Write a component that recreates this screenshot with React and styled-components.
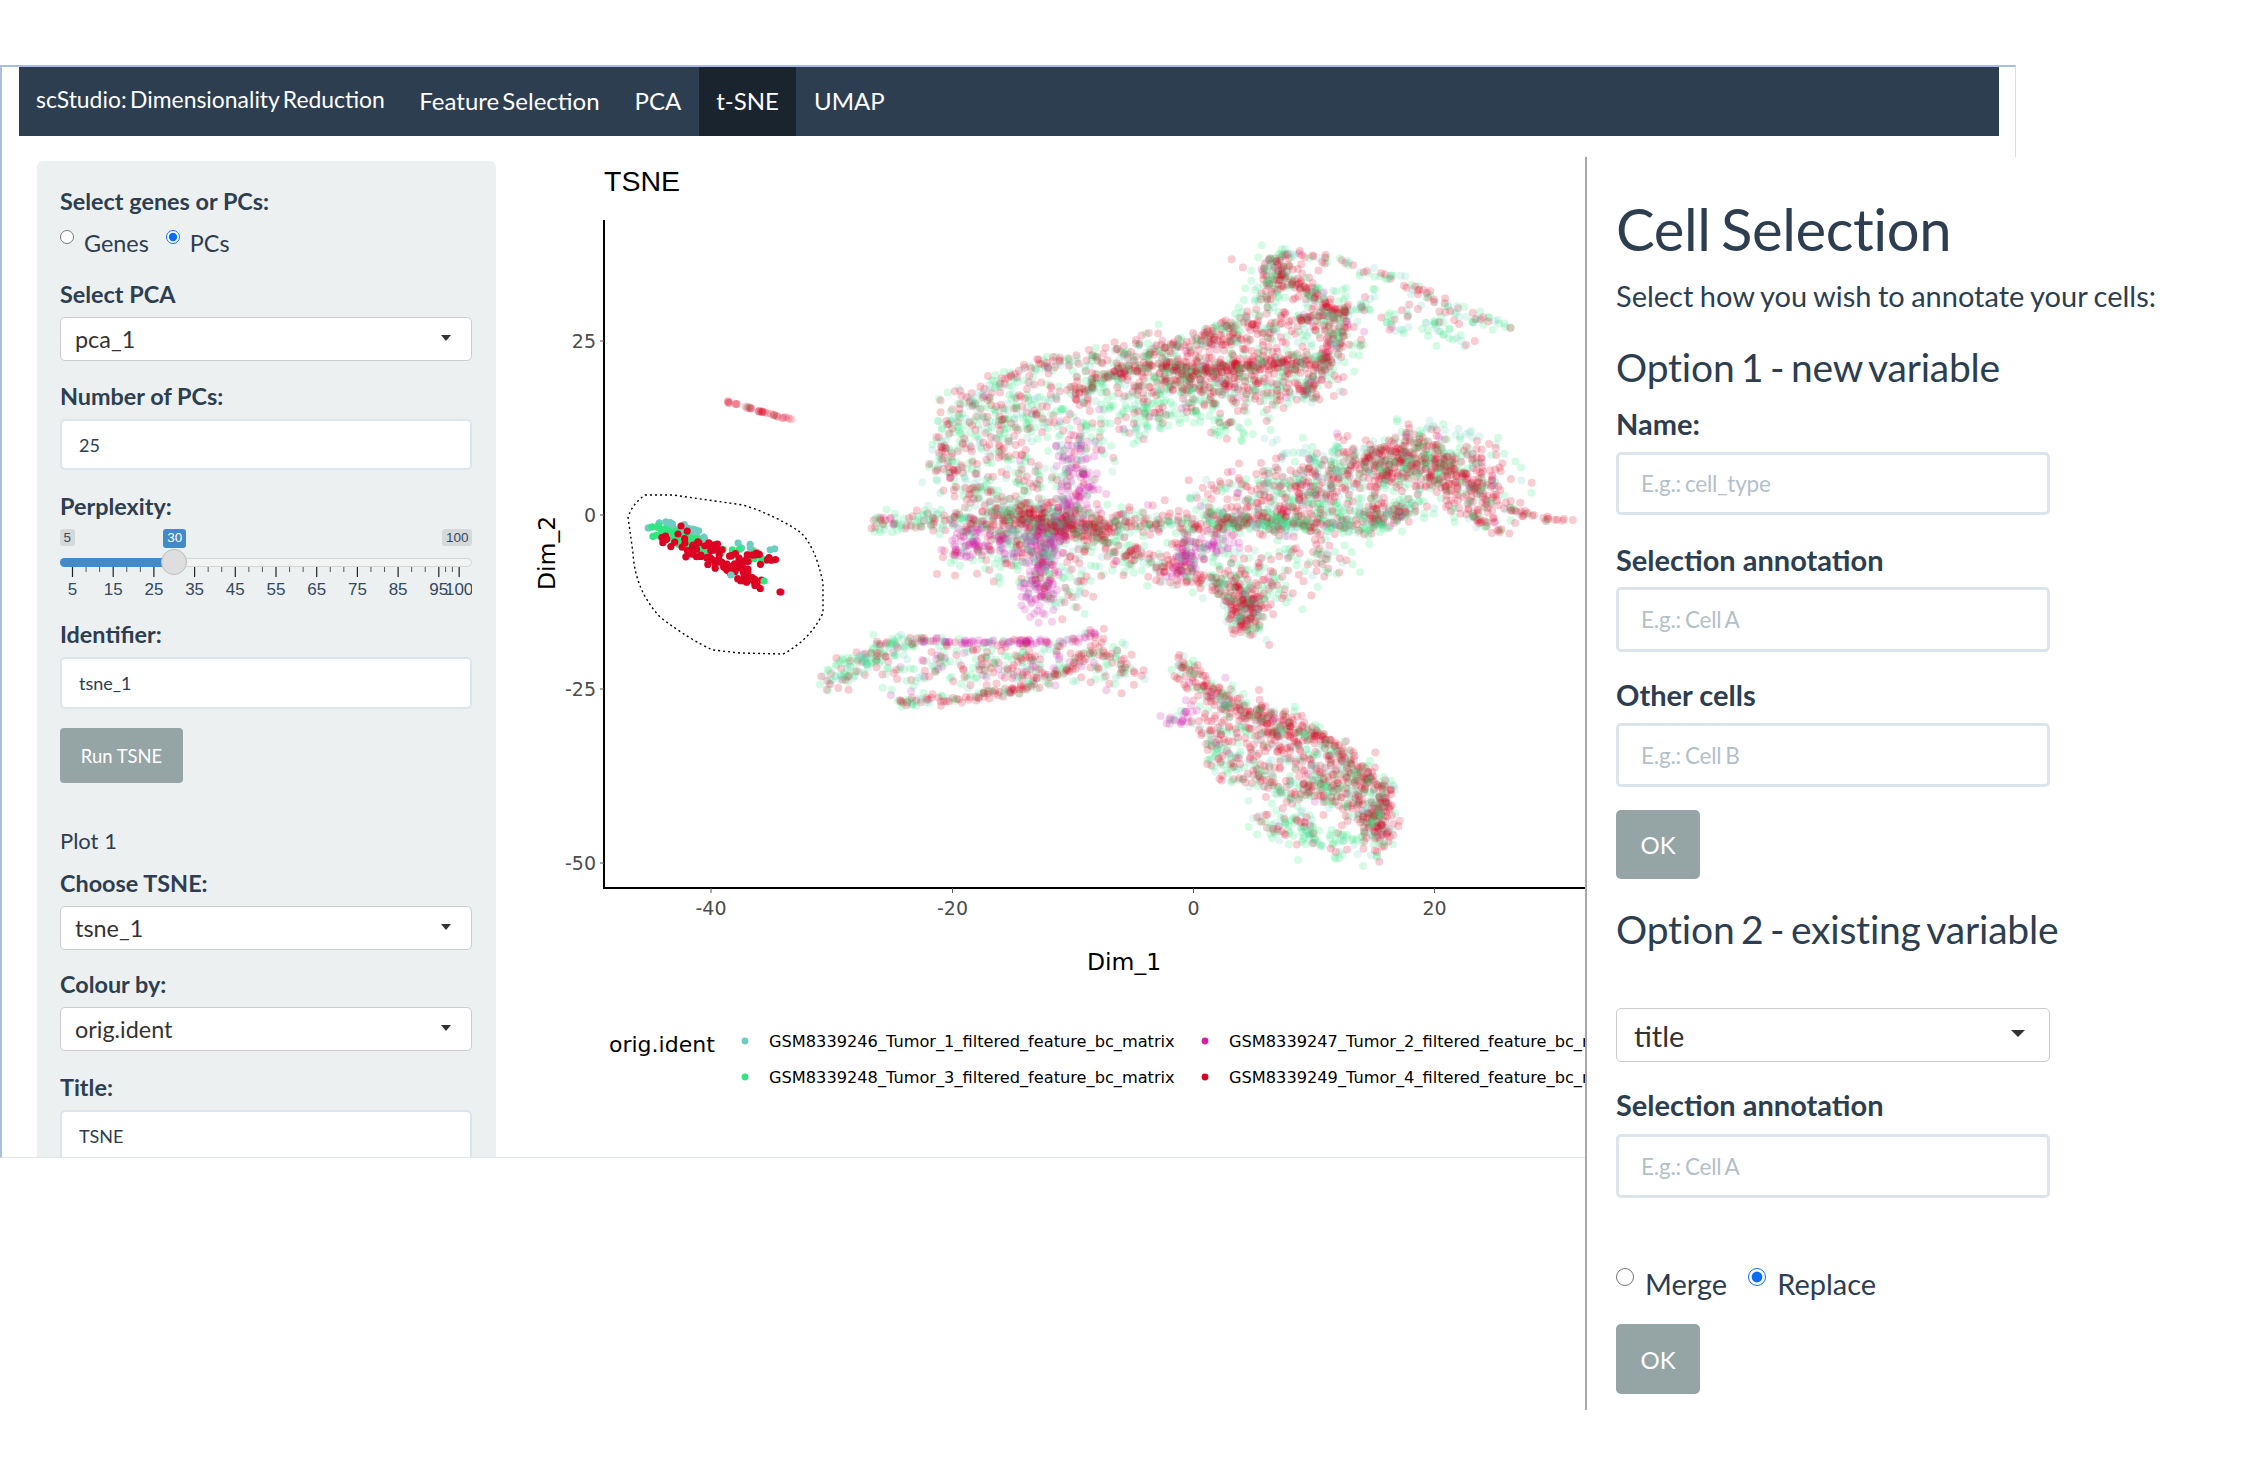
import React from 'react';
import styled, { createGlobalStyle } from 'styled-components';

const GlobalStyle = createGlobalStyle`
  html, body {
    margin: 0;
    padding: 0;
    background: #fff;
    font-family: Lato, "Open Sans", sans-serif;
    color: #2c3e50;
  }
`;

const Page = styled.div`
  position: relative;
  width: 2268px;
  height: 1466px;
  padding-top: 65px;
  box-sizing: border-box;
  overflow: hidden;
`;

const Frame = styled.div`
  width: 2016px;
  height: 1093px;
  box-sizing: border-box;
  padding-left: 17px;
  border-top: 2px solid #a9bce6;
  border-left: 2px solid #a9bce6;
  border-right: 1px solid #d5def2;
  border-bottom: 1px solid #dfe6f2;
  overflow: hidden;
`;

const Navbar = styled.nav`
  display: flex;
  width: 1980px;
  height: 69px;
  background: #2c3e50;
  color: #fff;
`;

const Brand = styled.div`
  display: flex;
  align-items: center;
  padding: 0 17px 5px;
  font-size: 22.9px;
  word-spacing: -2.4px;
`;

const NavItem = styled.div`
  display: flex;
  align-items: center;
  padding: 0 17.5px 3px;
  font-size: 24px;
  word-spacing: -3px;
  background: ${(p) => (p.$active ? '#1a242f' : 'transparent')};
`;

const Row = styled.div`
  display: flex;
  align-items: flex-start;
`;

const Sidebar = styled.aside`
  flex: none;
  width: 459px;
  height: 1100px;
  margin: 25px 0 0 18px;
  padding: 25px 23px 0;
  box-sizing: border-box;
  background: #ecf0f1;
  border-radius: 6px;
`;

const Label = styled.div`
  margin-top: ${(p) => p.$top || 0}px;
  margin-bottom: 8px;
  font-size: 23.4px;
  line-height: 30px;
  font-weight: 700;
  color: #2c3e50;
`;

const RadioRow = styled.div`
  display: flex;
  align-items: center;
  height: ${(p) => p.$height}px;
  margin-top: ${(p) => p.$top}px;
  font-size: ${(p) => p.$size}px;
  color: #2c3e50;
`;

const RadioItem = styled.label`
  display: flex;
  align-items: center;
  margin-right: ${(p) => p.$gap}px;
`;

const Radio = styled.input.attrs({ type: 'radio' })`
  flex: none;
  width: ${(p) => p.$size}px;
  height: ${(p) => p.$size}px;
  margin: -12px ${(p) => p.$space}px 0 0;
  accent-color: #0a6cf5;
`;

const SelectBox = styled.div`
  display: flex;
  align-items: center;
  justify-content: space-between;
  width: ${(p) => (p.$big ? 434 : 412)}px;
  height: ${(p) => (p.$big ? 54 : 44)}px;
  padding: 0 ${(p) => (p.$big ? 24 : 20)}px 0 ${(p) => (p.$big ? 17 : 14)}px;
  box-sizing: border-box;
  background: #fff;
  border: 1px solid #ccc;
  border-radius: 5px;
  font-size: ${(p) => (p.$big ? 29 : 23.4)}px;
  color: #333;
`;

const Caret = styled.span`
  width: 0;
  height: 0;
  margin-top: -3px;
  border-left: ${(p) => (p.$big ? 7 : 5.5)}px solid transparent;
  border-right: ${(p) => (p.$big ? 7 : 5.5)}px solid transparent;
  border-top: ${(p) => (p.$big ? 7 : 6)}px solid #333;
`;

const SideInput = styled.input`
  display: block;
  width: 412px;
  height: ${(p) => p.$height || 52}px;
  padding: 0 17px;
  box-sizing: border-box;
  background: #fff;
  border: 2.5px solid #dce4ec;
  border-radius: 5px;
  font: 18px Lato, sans-serif;
  color: #2c3e50;
  outline: none;
`;

const SliderWrap = styled.div`
  position: relative;
  width: 412px;
  height: 90px;
`;

const Chip = styled.span`
  position: absolute;
  top: 0;
  height: ${(p) => (p.$active ? 19 : 17)}px;
  padding: 0 ${(p) => (p.$active ? 4 : 3.5)}px;
  background: ${(p) => (p.$active ? '#428bca' : '#d5d9da')};
  color: ${(p) => (p.$active ? '#fff' : '#34495e')};
  border-radius: 3px;
  font: 13.5px/17px "Liberation Sans", sans-serif;
`;

const Track = styled.div`
  position: absolute;
  left: 0;
  right: 0;
  top: 29px;
  height: 9px;
  background: #f2f4f4;
  border: 1px solid #d3d6d7;
  box-sizing: border-box;
  border-radius: 5px;
`;

const TrackFill = styled.div`
  position: absolute;
  left: 0;
  top: 29px;
  height: 9px;
  background: #428bca;
  border-radius: 5px 0 0 5px;
`;

const Thumb = styled.div`
  position: absolute;
  top: 20px;
  width: 26px;
  height: 26px;
  box-sizing: border-box;
  background: #dedede;
  border: 1px solid #bdbdbd;
  border-radius: 50%;
`;

const Ruler = styled.svg`
  position: absolute;
  left: 0;
  top: 38px;
`;

const RunButton = styled.div`
  display: flex;
  align-items: center;
  justify-content: center;
  width: 123px;
  height: 55px;
  margin-top: 19px;
  background: #95a5a6;
  border-radius: 4px;
  color: #fff;
  font-size: 18.4px;
`;

const PlotLabel = styled.div`
  margin-top: 43px;
  margin-bottom: 12px;
  font-size: 22px;
  line-height: 30px;
  color: #2c3e50;
`;

const PlotSvg = styled.svg`
  flex: none;
  margin: 14px 0 0 24px;
`;

const Panel = styled.section`
  position: absolute;
  left: 1585px;
  top: 157px;
  width: 683px;
  height: 1253px;
  box-sizing: border-box;
  padding: 39px 0 0 29px;
  background: #fff;
  border-left: 2px solid #a8a8a8;
`;

const PanelTitle = styled.h1`
  margin: 0;
  font-size: 58px;
  line-height: 66px;
  font-weight: 400;
  letter-spacing: -0.4px;
  word-spacing: -4px;
  color: #2c3e50;
`;

const PanelText = styled.p`
  margin: 14px 0 0;
  font-size: 29px;
  line-height: 40px;
  word-spacing: -1px;
  white-space: nowrap;
  color: #2c3e50;
`;

const OptionTitle = styled.h3`
  margin: ${(p) => p.$top}px 0 ${(p) => p.$bottom || 0}px;
  font-size: 39px;
  line-height: 50px;
  font-weight: 400;
  letter-spacing: -0.2px;
  word-spacing: -3.2px;
  color: #2c3e50;
`;

const PanelLabel = styled.div`
  margin: ${(p) => p.$top}px 0 ${(p) => p.$bottom}px;
  font-size: 29px;
  line-height: 36px;
  font-weight: 700;
  color: #2c3e50;
`;

const PanelInput = styled.input`
  display: block;
  width: 434px;
  height: ${(p) => p.$height}px;
  padding: 0 22px;
  box-sizing: border-box;
  background: #fff;
  border: 3px solid #dce4ec;
  border-radius: 5px;
  font: 22.5px Lato, sans-serif;
  letter-spacing: -0.2px;
  word-spacing: -1.6px;
  outline: none;
  &::placeholder {
    color: #b4bfca;
    opacity: 1;
  }
`;

const OkButton = styled.div`
  display: flex;
  align-items: center;
  justify-content: center;
  width: 84px;
  height: ${(p) => p.$height}px;
  margin-top: ${(p) => p.$top}px;
  background: #95a5a6;
  border-radius: 5px;
  color: #fff;
  font-size: 24px;
`;

// scatter data, generated from hand traced strands of the t-SNE map
const COLORS = ['#6dcdc0', '#d21fa8', '#2ee87f', '#dc0022'];
const RED = [0.08, 0.01, 0.26, 0.65];
const GREEN = [0.2, 0.01, 0.54, 0.25];
const MIXED = [0.14, 0.02, 0.38, 0.46];
const PINK = [0.04, 0.8, 0.08, 0.08];
const TEAL = [0.7, 0, 0.2, 0.1];

const mulberry = (seed) => () => {
  seed = (seed + 0x6d2b79f5) | 0;
  let t = Math.imul(seed ^ (seed >>> 15), 1 | seed);
  t = (t + Math.imul(t ^ (t >>> 7), 61 | t)) ^ t;
  return ((t ^ (t >>> 14)) >>> 0) / 4294967296;
};

const STRANDS = [
  // upper arc
  [[[610, 640], [620, 570], [650, 510], [700, 465], [760, 430], [830, 415], [900, 410], [960, 395], [1020, 365], [1060, 330], [1085, 290], [1095, 240], [1105, 210]], 9, 320, MIXED],
  [[[1080, 225], [1105, 208], [1150, 210], [1200, 230], [1270, 260], [1340, 310], [1440, 365]], 7, 110, MIXED],
  [[[810, 490], [850, 455], [900, 435], [1000, 440], [1100, 430], [1170, 420]], 6, 260, RED],
  [[[1100, 240], [1150, 290], [1190, 340], [1185, 410], [1130, 500]], 8, 190, RED],
  [[[1130, 345], [1190, 325], [1235, 310]], 3, 40, RED],
  [[[1200, 300], [1290, 340], [1380, 370]], 22, 80, GREEN],
  [[[990, 380], [1060, 370], [1120, 350]], 16, 110, RED],
  [[[900, 480], [1000, 470], [1150, 490]], 24, 230, MIXED],
  [[[850, 570], [930, 520], [1000, 530], [1060, 570]], 20, 130, GREEN],
  [[[640, 520], [720, 530], [800, 560], [850, 590]], 26, 110, GREEN],
  // fill of the upper region
  [[[660, 600], [760, 490], [900, 490]], 34, 230, MIXED],
  [[[900, 410], [1000, 450], [1150, 430]], 30, 340, RED],
  [[[1090, 240], [1150, 320], [1190, 400]], 26, 180, MIXED],
  // left body
  [[[615, 620], [650, 680], [720, 730], [800, 760]], 16, 200, MIXED],
  [[[680, 600], [740, 650], [790, 700]], 28, 110, MIXED],
  // central band
  [[[505, 750], [600, 745], [700, 745], [800, 750], [900, 745], [1000, 745], [1100, 750], [1200, 745], [1300, 720]], 13, 620, MIXED],
  [[[1000, 745], [1100, 750], [1230, 760], [1290, 725]], 8, 170, GREEN],
  [[[720, 745], [780, 750], [860, 770]], 15, 200, RED],
  [[[1090, 700], [1170, 650], [1230, 620]], 30, 170, MIXED],
  [[[1130, 600], [1160, 640], [1180, 700]], 24, 50, TEAL],
  [[[1000, 720], [1150, 700], [1300, 650]], 36, 340, MIXED],
  [[[640, 790], [800, 800], [1000, 820], [1120, 870]], 30, 320, MIXED],
  // right blob
  [[[1210, 640], [1290, 600], [1350, 650], [1420, 690]], 18, 250, RED],
  [[[1220, 620], [1350, 650], [1420, 700]], 26, 240, RED],
  [[[1290, 560], [1350, 610], [1430, 640]], 18, 60, MIXED],
  [[[1340, 700], [1390, 740], [1430, 770]], 6, 50, RED],
  [[[1430, 720], [1480, 740], [1540, 745]], 3, 30, RED],
  [[[1300, 560], [1330, 560], [1440, 595]], 7, 20, TEAL],
  // pink threads
  [[[800, 590], [820, 680], [770, 760], [750, 920]], 14, 330, PINK],
  [[[620, 790], [690, 780], [760, 800]], 16, 130, PINK],
  [[[950, 850], [980, 800], [1025, 790]], 13, 100, PINK],
  [[[690, 800], [760, 860], [810, 900]], 24, 90, MIXED],
  // mid lower branch
  [[[860, 800], [960, 850], [1050, 900], [1060, 970]], 13, 160, RED],
  [[[1110, 860], [1070, 900], [1050, 950]], 13, 60, RED],
  [[[1020, 870], [1060, 900], [1060, 960]], 14, 120, RED],
  [[[1130, 800], [1200, 830], [1100, 800]], 22, 50, MIXED],
  // lower left band
  [[[450, 1075], [500, 1020], [570, 985]], 12, 130, GREEN],
  [[[575, 985], [700, 990], [810, 985], [835, 970]], 3, 100, PINK],
  [[[550, 1110], [640, 1105], [720, 1085], [800, 1040], [830, 1000]], 5, 140, RED],
  [[[600, 1020], [680, 1040], [760, 1020]], 24, 70, MIXED],
  [[[500, 1050], [650, 1040], [850, 1030]], 24, 160, [0.14, 0.16, 0.3, 0.4]],
  [[[830, 990], [860, 1020], [880, 1060]], 16, 60, RED],
  // bottom right band
  [[[960, 1030], [990, 1080], [1050, 1130], [1130, 1160], [1190, 1210], [1250, 1290], [1250, 1380]], 11, 460, RED],
  [[[1000, 1150], [1020, 1230], [1100, 1280], [1180, 1290], [1240, 1340], [1250, 1400]], 15, 300, MIXED],
  [[[1010, 1110], [1110, 1210], [1230, 1310]], 26, 330, RED],
  [[[1070, 1330], [1140, 1380], [1225, 1400]], 20, 130, GREEN],
  [[[930, 1145], [960, 1150], [985, 1105]], 6, 24, PINK],
  // small group above the lasso
  [[[297, 505], [350, 525], [400, 545]], 1, 34, [0, 0, 0.05, 0.95]],
];

const buildPoints = () => {
  const rnd = mulberry(20);
  const gauss = () => (rnd() + rnd() + rnd() - 1.5) / 0.75;
  const pick = (mix) => {
    let r = rnd();
    for (let i = 0; i < 4; i += 1) {
      r -= mix[i];
      if (r <= 0) return i;
    }
    return 3;
  };
  const pts = [];
  STRANDS.forEach(([line, spread, count, mix]) => {
    const lens = line.slice(1).map((p, i) => Math.hypot(p[0] - line[i][0], p[1] - line[i][1]));
    const total = lens.reduce((a, b) => a + b, 0);
    for (let n = 0; n < count; n += 1) {
      let d = rnd() * total;
      let i = 0;
      while (i < lens.length - 1 && d > lens[i]) {
        d -= lens[i];
        i += 1;
      }
      const t = d / lens[i];
      const zx = line[i][0] + (line[i + 1][0] - line[i][0]) * t + gauss() * spread * 1.5;
      const zy = line[i][1] + (line[i + 1][1] - line[i][1]) * t + gauss() * spread * 1.5;
      pts.push({ x: 520 + zx / 1.452, y: 150 + zy / 2.01, c: COLORS[pick(mix)], k: rnd() });
    }
  });
  return pts.sort((a, b) => a.k - b.k);
};

const buildSelected = () => {
  const rnd = mulberry(7);
  const pts = [];
  const along = (x0, y0, x1, y1, spread, count, c) => {
    for (let n = 0; n < count; n += 1) {
      const t = rnd();
      pts.push({
        x: x0 + (x1 - x0) * t + (rnd() - 0.5) * spread,
        y: y0 + (y1 - y0) * t + (rnd() - 0.5) * spread,
        c,
      });
    }
  };
  along(652, 523, 705, 535, 10, 36, COLORS[0]);
  along(739, 547, 772, 556, 14, 12, COLORS[0]);
  along(654, 527, 705, 548, 15, 55, COLORS[2]);
  along(705, 545, 768, 562, 12, 14, COLORS[2]);
  along(662, 535, 666, 541, 7, 6, COLORS[3]);
  along(682, 543, 762, 578, 24, 90, COLORS[3]);
  along(748, 553, 775, 560, 5, 10, COLORS[3]);
  pts.push({ x: 681, y: 526, c: COLORS[3] }, { x: 678, y: 534, c: COLORS[3] }, { x: 731, y: 575, c: COLORS[0] }, { x: 764, y: 581, c: COLORS[2] });
  pts.push({ x: 781, y: 592, c: COLORS[1] }, { x: 780, y: 592, c: COLORS[3] });
  return pts;
};

const LASSO = 'M 645 495 L 673 495 L 743 505 Q 775 515 800 532 Q 815 545 823 583 L 823 613 Q 810 640 783 654 L 740 653 L 713 650 Q 690 640 660 617 Q 635 590 633 553 L 628 517 Q 633 503 645 495 Z';

const POINTS = buildPoints();
const SELECTED = buildSelected();
const LEGEND = [
  { x: 745, y: 1041, c: COLORS[0], label: 'GSM8339246_Tumor_1_filtered_feature_bc_matrix' },
  { x: 1205, y: 1041, c: COLORS[1], label: 'GSM8339247_Tumor_2_filtered_feature_bc_matrix' },
  { x: 745, y: 1077, c: COLORS[2], label: 'GSM8339248_Tumor_3_filtered_feature_bc_matrix' },
  { x: 1205, y: 1077, c: COLORS[3], label: 'GSM8339249_Tumor_4_filtered_feature_bc_matrix' },
];
const DEJAVU = '"DejaVu Sans", sans-serif';
const ARIAL = '"Liberation Sans", sans-serif';

const TsnePlot = () => (
  <PlotSvg width="1065" height="1007" viewBox="520 150 1065 1007">
    <text x="604" y="191" fontFamily={ARIAL} fontSize="28.5" fill="#000">TSNE</text>
    {POINTS.map((p, i) => (
      <circle key={i} cx={p.x} cy={p.y} r="4" fill={p.c} opacity="0.2" />
    ))}
    {SELECTED.map((p, i) => (
      <circle key={i} cx={p.x} cy={p.y} r="3.6" fill={p.c} />
    ))}
    <path d={LASSO} fill="none" stroke="#000" strokeWidth="1.4" strokeDasharray="2 3" />
    <path d="M604 220 V888 H1585" fill="none" stroke="#000" strokeWidth="2" />
    {[[25, 341], [0, 515], [-25, 689], [-50, 863]].map(([v, y]) => (
      <g key={v}>
        <line x1="600" x2="604" y1={y} y2={y} stroke="#555" />
        <text x="596" y={y + 6.5} textAnchor="end" fontFamily={DEJAVU} fontSize="19" fill="#4d4d4d">{v}</text>
      </g>
    ))}
    {[[-40, 711], [-20, 952.5], [0, 1193.5], [20, 1434.6]].map(([v, x]) => (
      <g key={v}>
        <line x1={x} x2={x} y1="888" y2="893" stroke="#555" />
        <text x={x} y="915" textAnchor="middle" fontFamily={DEJAVU} fontSize="19" fill="#4d4d4d">{v}</text>
      </g>
    ))}
    <text x="1124" y="970" textAnchor="middle" fontFamily={DEJAVU} fontSize="23.5" fill="#000">Dim_1</text>
    <text transform="translate(555 553) rotate(-90)" textAnchor="middle" fontFamily={DEJAVU} fontSize="23.5" fill="#000">Dim_2</text>
    <text x="609" y="1052" fontFamily={DEJAVU} fontSize="22" fill="#000">orig.ident</text>
    {LEGEND.map((l) => (
      <g key={l.label}>
        <circle cx={l.x} cy={l.y} r="3.4" fill={l.c} />
        <text x={l.x + 24} y={l.y + 5.5} fontFamily={DEJAVU} fontSize="16.2" fill="#000">{l.label}</text>
      </g>
    ))}
  </PlotSvg>
);

const PerplexitySlider = () => {
  const tickX = (v) => 12.5 + (v - 5) * 4.07;
  const majors = [5, 15, 25, 35, 45, 55, 65, 75, 85, 95];
  const minors = majors.flatMap((v) => (v === 95
    ? [v + 5 / 3, v + 10 / 3]
    : [v + 10 / 3, v + 20 / 3]));
  return (
    <SliderWrap>
      <Chip style={{ left: 0 }}>5</Chip>
      <Chip $active style={{ left: tickX(30) - 11 }}>30</Chip>
      <Chip style={{ right: 0 }}>100</Chip>
      <Track />
      <TrackFill style={{ width: tickX(30) }} />
      <Ruler width="412" height="50" viewBox="0 0 412 50">
        {minors.map((v) => (
          <line key={v} x1={tickX(v)} x2={tickX(v)} y1="0" y2="5" stroke="#555" />
        ))}
        {[...majors, 100].map((v) => (
          <line key={v} x1={tickX(v)} x2={tickX(v)} y1="0" y2="10" stroke="#222" strokeWidth="1.2" />
        ))}
        {[...majors, 100].map((v) => (
          <text key={v} x={tickX(v)} y="28" textAnchor="middle" fontFamily={ARIAL} fontSize="17" fill="#34495e">{v}</text>
        ))}
      </Ruler>
      <Thumb style={{ left: tickX(30) - 13 }} />
    </SliderWrap>
  );
};

const App = () => (
  <Page>
    <GlobalStyle />
    <Frame>
      <Navbar>
        <Brand>scStudio: Dimensionality Reduction</Brand>
        <NavItem>Feature Selection</NavItem>
        <NavItem>PCA</NavItem>
        <NavItem $active>t-SNE</NavItem>
        <NavItem>UMAP</NavItem>
      </Navbar>
      <Row>
        <Sidebar>
          <Label>Select genes or PCs:</Label>
          <RadioRow $height={30} $top={12} $size={23.4}>
            <RadioItem $gap={17}>
              <Radio name="mode" $size={14} $space={10} />
              Genes
            </RadioItem>
            <RadioItem $gap={0}>
              <Radio name="mode" $size={14} $space={10} defaultChecked />
              PCs
            </RadioItem>
          </RadioRow>
          <Label $top={21}>Select PCA</Label>
          <SelectBox>pca_1<Caret /></SelectBox>
          <Label $top={20}>Number of PCs:</Label>
          <SideInput $height={51} defaultValue="25" />
          <Label $top={21}>Perplexity:</Label>
          <PerplexitySlider />
          <Label>Identifier:</Label>
          <SideInput defaultValue="tsne_1" />
          <RunButton>Run TSNE</RunButton>
          <PlotLabel>Plot 1</PlotLabel>
          <Label>Choose TSNE:</Label>
          <SelectBox>tsne_1<Caret /></SelectBox>
          <Label $top={19}>Colour by:</Label>
          <SelectBox>orig.ident<Caret /></SelectBox>
          <Label $top={21}>Title:</Label>
          <SideInput defaultValue="TSNE" />
        </Sidebar>
        <TsnePlot />
      </Row>
    </Frame>
    <Panel>
      <PanelTitle>Cell Selection</PanelTitle>
      <PanelText>Select how you wish to annotate your cells:</PanelText>
      <OptionTitle $top={26}>Option 1 - new variable</OptionTitle>
      <PanelLabel $top={14} $bottom={10}>Name:</PanelLabel>
      <PanelInput $height={63} placeholder="E.g.: cell_type" />
      <PanelLabel $top={27} $bottom={9}>Selection annotation</PanelLabel>
      <PanelInput $height={65} placeholder="E.g.: Cell A" />
      <PanelLabel $top={25} $bottom={10}>Other cells</PanelLabel>
      <PanelInput $height={64} placeholder="E.g.: Cell B" />
      <OkButton $top={23} $height={69}>OK</OkButton>
      <OptionTitle $top={25} $bottom={54}>Option 2 - existing variable</OptionTitle>
      <SelectBox $big>title<Caret $big /></SelectBox>
      <PanelLabel $top={25} $bottom={11}>Selection annotation</PanelLabel>
      <PanelInput $height={64} placeholder="E.g.: Cell A" />
      <RadioRow $height={40} $top={65} $size={29}>
        <RadioItem $gap={21}>
          <Radio name="how" $size={18} $space={11} />
          Merge
        </RadioItem>
        <RadioItem $gap={0}>
          <Radio name="how" $size={18} $space={11} defaultChecked />
          Replace
        </RadioItem>
      </RadioRow>
      <OkButton $top={21} $height={70}>OK</OkButton>
    </Panel>
  </Page>
);

export default App;
